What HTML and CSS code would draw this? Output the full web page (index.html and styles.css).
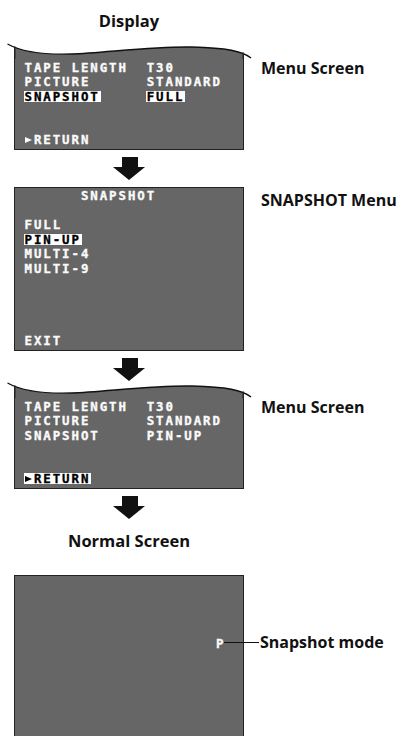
FILE: index.html
```html
<!DOCTYPE html>
<html lang="en">
    <head>
        <meta charset="UTF-8" />
        <meta name="viewport" content="width=device-width, initial-scale=1.0" />
        <title>Snapshot mode</title>
        <link rel="stylesheet" href="styles.css">
    </head>
    <body>
        <div id="contenedor">
            <h2 class="titulo">Display</h2>

            <!-- menu principal -->
            <div class="paso">
                <div class="pantalla">
                    <svg class="onda" width="246" height="17" viewBox="0 0 246 17">
                        <defs><clipPath id="corte1"><rect x="7.5" y="0" width="229" height="17" /></clipPath></defs>
                        <path class="relleno" clip-path="url(#corte1)" d="M0.5,2 C15,10 35,13 65,12 S150,4 185,5 S235,9 244,16 L244,17 L0,17 Z" />
                        <path class="trazo" d="M0.5,2 C15,10 35,13 65,12 S150,4 185,5 S235,9 244,16" />
                        <line class="lado" x1="7.75" y1="4.5" x2="7.75" y2="17" />
                        <line class="lado" x1="236.25" y1="10.5" x2="236.25" y2="17" />
                    </svg>
                    <div class="osd menu">
<div class="fila">TAPE LENGTH  T30</div>
<div class="fila">PICTURE      STANDARD</div>
<div class="fila"><span class="marca">SNAPSHOT</span>     <span class="marca">FULL</span></div>
<div class="fila volver"><span class="tri"></span>RETURN</div>
                    </div>
                </div>
                <p class="rotulo">Menu Screen</p>
            </div>

            <svg class="flecha" width="32" height="23" viewBox="0 0 32 23"><path d="M9,0 H25 V10 H32 L16,23 L0,10 H9 Z" /></svg>

            <!-- submenu snapshot -->
            <div class="paso">
                <div class="osd submenu">
<div class="fila cabecera">      SNAPSHOT</div>
<div class="fila">FULL</div>
<div class="fila"><span class="marca">PIN-UP</span></div>
<div class="fila">MULTI-4</div>
<div class="fila">MULTI-9</div>
<div class="fila volver">EXIT</div>
                </div>
                <p class="rotulo rotuloSub">SNAPSHOT Menu</p>
            </div>

            <svg class="flecha" width="32" height="23" viewBox="0 0 32 23"><path d="M9,0 H25 V10 H32 L16,23 L0,10 H9 Z" /></svg>

            <!-- menu principal con pin-up -->
            <div class="paso pasoJunto">
                <div class="pantalla">
                    <svg class="onda" width="246" height="17" viewBox="0 0 246 17">
                        <defs><clipPath id="corte2"><rect x="7.5" y="0" width="229" height="17" /></clipPath></defs>
                        <path class="relleno" clip-path="url(#corte2)" d="M0.5,2 C15,10 35,13 65,12 S150,4 185,5 S235,9 244,16 L244,17 L0,17 Z" />
                        <path class="trazo" d="M0.5,2 C15,10 35,13 65,12 S150,4 185,5 S235,9 244,16" />
                        <line class="lado" x1="7.75" y1="4.5" x2="7.75" y2="17" />
                        <line class="lado" x1="236.25" y1="10.5" x2="236.25" y2="17" />
                    </svg>
                    <div class="osd menu">
<div class="fila">TAPE LENGTH  T30</div>
<div class="fila">PICTURE      STANDARD</div>
<div class="fila">SNAPSHOT     PIN-UP</div>
<div class="fila volver"><span class="marca"><span class="tri"></span>RETURN</span></div>
                    </div>
                </div>
                <p class="rotulo">Menu Screen</p>
            </div>

            <svg class="flecha" width="32" height="23" viewBox="0 0 32 23"><path d="M9,0 H25 V10 H32 L16,23 L0,10 H9 Z" /></svg>

            <h2 class="titulo tituloNormal">Normal Screen</h2>

            <!-- pantalla normal -->
            <div class="paso">
                <div class="osd normal">P</div>
                <p class="rotulo rotuloModo"><span class="guia"></span>Snapshot mode</p>
            </div>
        </div>
    </body>
</html>
```

FILE: styles.css
```css
*{
    margin: 0;
    padding: 0;
    box-sizing: border-box;
}
body{
    background-color: #fff;
    color: #111;
    font-family: "Open Sans", Lato, sans-serif;
}
#contenedor{
    padding: 11px 0 0 14px;
}
.titulo{
    width: 230px;
    text-align: center;
    font-size: 16.5px;
    line-height: 20px;
    font-weight: bold;
    margin-bottom: 11px;
}
.tituloNormal{
    margin-top: 12px;
    margin-bottom: 24px;
}
.paso{
    display: flex;
    align-items: flex-start;
}
.rotulo{
    margin: 16px 0 0 17px;
    font-size: 16px;
    line-height: 20px;
    font-weight: bold;
    white-space: nowrap;
}
.rotuloSub{
    margin-top: 3px;
}
.rotuloModo{
    margin: 57px 0 0 -20px;
    display: flex;
    align-items: center;
}
.guia{
    display: block;
    width: 35px;
    height: 1.6px;
    margin: 1px 1px 0 0;
    background-color: #111;
}
.flecha{
    display: block;
    margin: 7px 0 7px 99px;
    fill: #111;
}
.pasoJunto{
    margin-top: -7px;
}

/* pantallas */
.pantalla{
    width: 230px;
    flex: none;
}
.onda{
    display: block;
    margin-left: -7px;
    overflow: visible;
}
.onda .relleno{
    fill: #666;
}
.onda .trazo{
    fill: none;
    stroke: #111;
    stroke-width: 1.4;
}
.onda .lado{
    stroke: #222;
    stroke-width: 1.5;
}
.osd{
    width: 230px;
    flex: none;
    background-color: #666;
    border: 1.5px solid #222;
    color: #fafafa;
    font-family: "DejaVu Sans Mono", monospace;
    font-weight: bold;
    font-size: 12.4px;
    letter-spacing: 1.94px;
    -webkit-text-stroke-width: 0.35px;
    white-space: pre;
    display: flex;
    flex-direction: column;
}
.fila{
    height: 14.5px;
    line-height: 14.5px;
}
.menu{
    height: 91px;
    border-top: none;
    padding: 1.6px 0 1.5px 9.5px;
}
.submenu{
    height: 164px;
    padding: 1.1px 0 1.5px 9.5px;
}
.cabecera{
    margin-bottom: 14.5px;
}
.volver{
    margin-top: auto;
}
.marca{
    display: inline-block;
    line-height: 11px;
    padding: 0 1px;
    margin: 0 -1px;
    background-color: #fff;
    color: #000;
}
.tri{
    display: inline-block;
    width: 0;
    height: 0;
    border-left: 7px solid currentColor;
    border-top: 3.5px solid transparent;
    border-bottom: 3.5px solid transparent;
    margin-right: 2.4px;
    vertical-align: 1px;
}
.normal{
    height: 164px;
    padding: 59.5px 17.5px 0 0;
    align-items: flex-end;
}
```
